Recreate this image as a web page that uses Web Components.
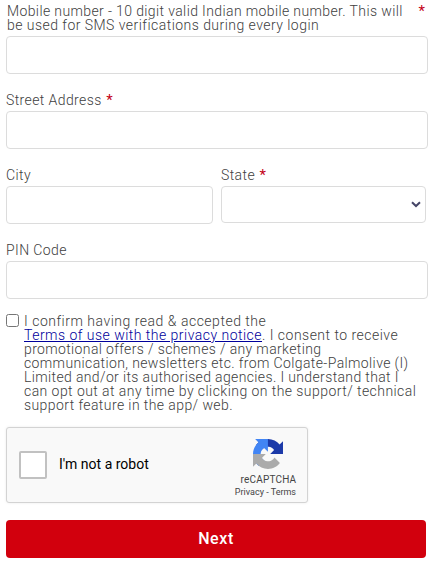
<!DOCTYPE html>
<html lang="en">
<head>
<meta charset="utf-8">
<title>Registration</title>
<style>
  body {
    margin: 0;
    background: #fff;
    color: #404040;
    font-family: Roboto, "Liberation Sans", sans-serif;
    font-size: 14px;
    font-weight: 300;
    line-height: 14px;
    letter-spacing: 0.4px;
  }
</style>
</head>
<body>
<registration-form></registration-form>

<script>
class FormField extends HTMLElement {
  constructor() {
    super();
    this.attachShadow({ mode: 'open' });
  }

  connectedCallback() {
    const required = this.hasAttribute('required');
    const select = this.getAttribute('type') === 'select';

    this.shadowRoot.innerHTML = `
      <style>
        :host {
          display: flex;
          flex-direction: column;
          gap: 4px;
        }
        .label {
          display: flex;
          gap: 4.5px;
          white-space: nowrap;
        }
        :host([wide]) .label {
          justify-content: space-between;
          padding: 0 3px 0 1px;
        }
        .star {
          color: #c40018;
          font-size: 15px;
          font-weight: 400;
          letter-spacing: 0;
        }
        .control {
          box-sizing: border-box;
          height: 38px;
          display: flex;
          align-items: center;
          justify-content: flex-end;
          padding: 0 4px;
          border: 1px solid #dcdcdc;
          border-radius: 4px;
          background: #fff;
        }
        .select {
          height: 37px;
        }
      </style>
      <div class="label"><slot></slot>${required ? '<span class="star">*</span>' : ''}</div>
      <div class="control ${select ? 'select' : ''}">
        ${select ? '<svg width="10" height="7" viewBox="0 0 10 7"><path d="M1 1.2 5 5l4-3.8" fill="none" stroke="#454567" stroke-width="2"/></svg>' : ''}
      </div>
    `;
  }
}

class ConsentCheck extends HTMLElement {
  constructor() {
    super();
    this.attachShadow({ mode: 'open' });
    this.shadowRoot.innerHTML = `
      <style>
        :host {
          display: flex;
          gap: 5px;
          white-space: nowrap;
        }
        .box {
          box-sizing: border-box;
          flex: none;
          width: 13px;
          height: 13px;
          border: 1px solid #767676;
          border-radius: 2.5px;
          background: #fff;
        }
      </style>
      <span class="box"></span>
      <div><slot></slot></div>
    `;
  }
}

class CaptchaBox extends HTMLElement {
  constructor() {
    super();
    this.attachShadow({ mode: 'open' });
    this.shadowRoot.innerHTML = `
      <style>
        :host {
          box-sizing: border-box;
          display: flex;
          align-items: center;
          width: 302px;
          height: 76px;
          padding: 0 5px 0 12px;
          border: 1px solid #d3d3d3;
          border-radius: 3px;
          background: #f9f9f9;
          box-shadow: 0 0 3px rgba(0, 0, 0, 0.08);
          color: #000;
          font-weight: 400;
          letter-spacing: 0;
        }
        .box {
          box-sizing: border-box;
          width: 28px;
          height: 28px;
          border: 2px solid #c1c1c1;
          border-radius: 2px;
          background: #fff;
        }
        .text {
          flex: 1;
          padding-left: 12px;
          margin-top: -2px;
        }
        .brand {
          display: flex;
          flex-direction: column;
          align-items: center;
          padding-top: 8px;
          color: #444;
          white-space: nowrap;
        }
        svg {
          display: block;
        }
        .name {
          margin-top: 5px;
          font-size: 10px;
          line-height: 12px;
          letter-spacing: 0.2px;
        }
        .links {
          margin-right: 6px;
          font-size: 9px;
          line-height: 13px;
        }
      </style>
      <span class="box"></span>
      <span class="text"><slot></slot></span>
      <div class="brand">
        <svg width="30" height="30" viewBox="0 0 64 64">
          <path fill="#1c3aa9" d="M64 31.955l-.033-1.37V4.687l-7.16 7.16C50.948 4.674 42.033.093 32.05.093c-10.4 0-19.622 4.96-25.458 12.64l11.736 11.86a15.55 15.55 0 0 1 4.754-5.334c2.05-1.6 4.952-2.906 8.968-2.906.485 0 .86.057 1.135.163 4.976.393 9.288 3.14 11.828 7.124l-8.307 8.307L64 31.953"/>
          <path fill="#4285f4" d="M31.862.094l-1.37.033H4.594l7.16 7.16C4.58 13.147 0 22.06 0 32.046c0 10.4 4.96 19.622 12.64 25.458L24.5 45.768a15.55 15.55 0 0 1-5.334-4.754c-1.6-2.05-2.906-4.952-2.906-8.968 0-.485.057-.86.163-1.135.393-4.976 3.14-9.288 7.124-11.828l8.307 8.307L31.86.095"/>
          <path fill="#ababab" d="M.001 32.045l.033 1.37v25.898l7.16-7.16c5.86 7.173 14.774 11.754 24.76 11.754 10.4 0 19.622-4.96 25.458-12.64l-11.736-11.86a15.55 15.55 0 0 1-4.754 5.334c-2.05 1.6-4.952 2.906-8.968 2.906-.485 0-.86-.057-1.135-.163-4.976-.393-9.288-3.14-11.828-7.124l8.307-8.307-31.297.013"/>
        </svg>
        <div class="name">reCAPTCHA</div>
        <div class="links">Privacy - Terms</div>
      </div>
    `;
  }
}

class SubmitButton extends HTMLElement {
  constructor() {
    super();
    this.attachShadow({ mode: 'open' });
    this.shadowRoot.innerHTML = `
      <style>
        :host {
          display: flex;
          align-items: center;
          justify-content: center;
          width: 420px;
          height: 38px;
          border-radius: 4px;
          background: #d2000d;
          color: #fff;
          font-size: 16px;
          font-weight: 500;
          letter-spacing: 0.6px;
        }
      </style>
      <slot></slot>
    `;
  }
}

class RegistrationForm extends HTMLElement {
  constructor() {
    super();
    this.attachShadow({ mode: 'open' });
    this.shadowRoot.innerHTML = `
      <style>
        :host {
          box-sizing: border-box;
          display: flex;
          flex-direction: column;
          gap: 19px;
          width: 438px;
          height: 577px;
          padding: 4px 10px 0 6px;
        }
        .row {
          display: grid;
          grid-template-columns: 207px 205px;
          gap: 8px;
        }
        .line {
          display: block;
          letter-spacing: var(--track);
        }
        consent-check {
          margin-top: -4px;
        }
        captcha-box {
          margin-top: -4px;
        }
        submit-button {
          margin-top: -2px;
        }
        a {
          color: #00009c;
          text-decoration: underline;
        }
      </style>
      <form-field wide required>
        <span>
          <span class="line" style="--track: 0.38px">Mobile number - 10 digit valid Indian mobile number. This will</span>
          <span class="line" style="--track: 0.46px">be used for SMS verifications during every login</span>
        </span>
      </form-field>
      <form-field required>Street Address</form-field>
      <div class="row">
        <form-field>City</form-field>
        <form-field type="select" required>State</form-field>
      </div>
      <form-field>PIN Code</form-field>
      <consent-check>
        <span class="line" style="--track: 0.51px">I confirm having read &amp; accepted the</span>
        <span class="line" style="--track: 0.48px"><a>Terms of use with the privacy notice</a>. I consent to receive</span>
        <span class="line" style="--track: 0.36px">promotional offers / schemes / any marketing</span>
        <span class="line" style="--track: 0.38px">communication, newsletters etc. from Colgate-Palmolive (I)</span>
        <span class="line" style="--track: 0.36px">Limited and/or its authorised agencies. I understand that I</span>
        <span class="line" style="--track: 0.44px">can opt out at any time by clicking on the support/ technical</span>
        <span class="line" style="--track: 0.41px">support feature in the app/ web.</span>
      </consent-check>
      <captcha-box>I'm not a robot</captcha-box>
      <submit-button>Next</submit-button>
    `;
  }
}

customElements.define('form-field', FormField);
customElements.define('consent-check', ConsentCheck);
customElements.define('captcha-box', CaptchaBox);
customElements.define('submit-button', SubmitButton);
customElements.define('registration-form', RegistrationForm);
</script>
</body>
</html>
